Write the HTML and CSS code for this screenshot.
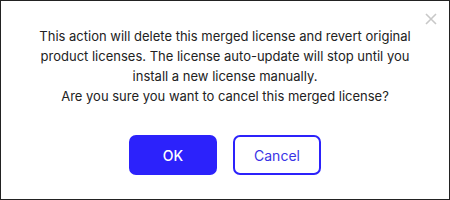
FILE: index.html
```html
<!DOCTYPE html>
<html lang="en">
<head>
    <meta charset="UTF-8">
    <title>Cancel merged license</title>
    <link rel="stylesheet" href="styles.css">
</head>
<body>
    <div class="dialog">
        <button class="close" aria-label="Close">
            <svg width="12" height="12" viewBox="0 0 12 12"><path d="M1 1L11 11M11 1L1 11" stroke="#c8c8c8" stroke-width="1.6"/></svg>
        </button>
        <div class="message">
            This action will delete this merged license and revert original
            product licenses. The license auto-update will stop until you
            install a new license manually.<br>
            Are you sure you want to cancel this merged license?
        </div>
        <div class="actions">
            <button class="btn btn-primary">OK</button>
            <button class="btn btn-outline">Cancel</button>
        </div>
    </div>
</body>
</html>
```

FILE: styles.css
```css
body {
    margin: 0;
    font-family: Inter, "Noto Sans", sans-serif;
    background: #fff;
}
.dialog {
    position: relative;
    box-sizing: border-box;
    width: 450px;
    height: 200px;
    border: 1px solid #222;
    padding: 25px 20px 0;
    display: flex;
    flex-direction: column;
    align-items: center;
}
.close {
    position: absolute;
    top: 12px;
    right: 12px;
    padding: 0;
    border: none;
    background: none;
    line-height: 0;
}
.message {
    width: 390px;
    font-size: 13px;
    line-height: 20px;
    color: #222;
    text-align: center;
}
.actions {
    display: flex;
    gap: 16px;
    margin-top: 29px;
}
.btn {
    box-sizing: border-box;
    width: 88px;
    height: 40px;
    border-radius: 7px;
    font-family: Inter, "Noto Sans", sans-serif;
    font-size: 14px;
    border: 2px solid #2c22fb;
}
.btn-primary {
    background: #2c22fb;
    color: #fff;
    font-weight: 500;
}
.btn-outline {
    background: #fff;
    color: #3a33e6;
}
```
